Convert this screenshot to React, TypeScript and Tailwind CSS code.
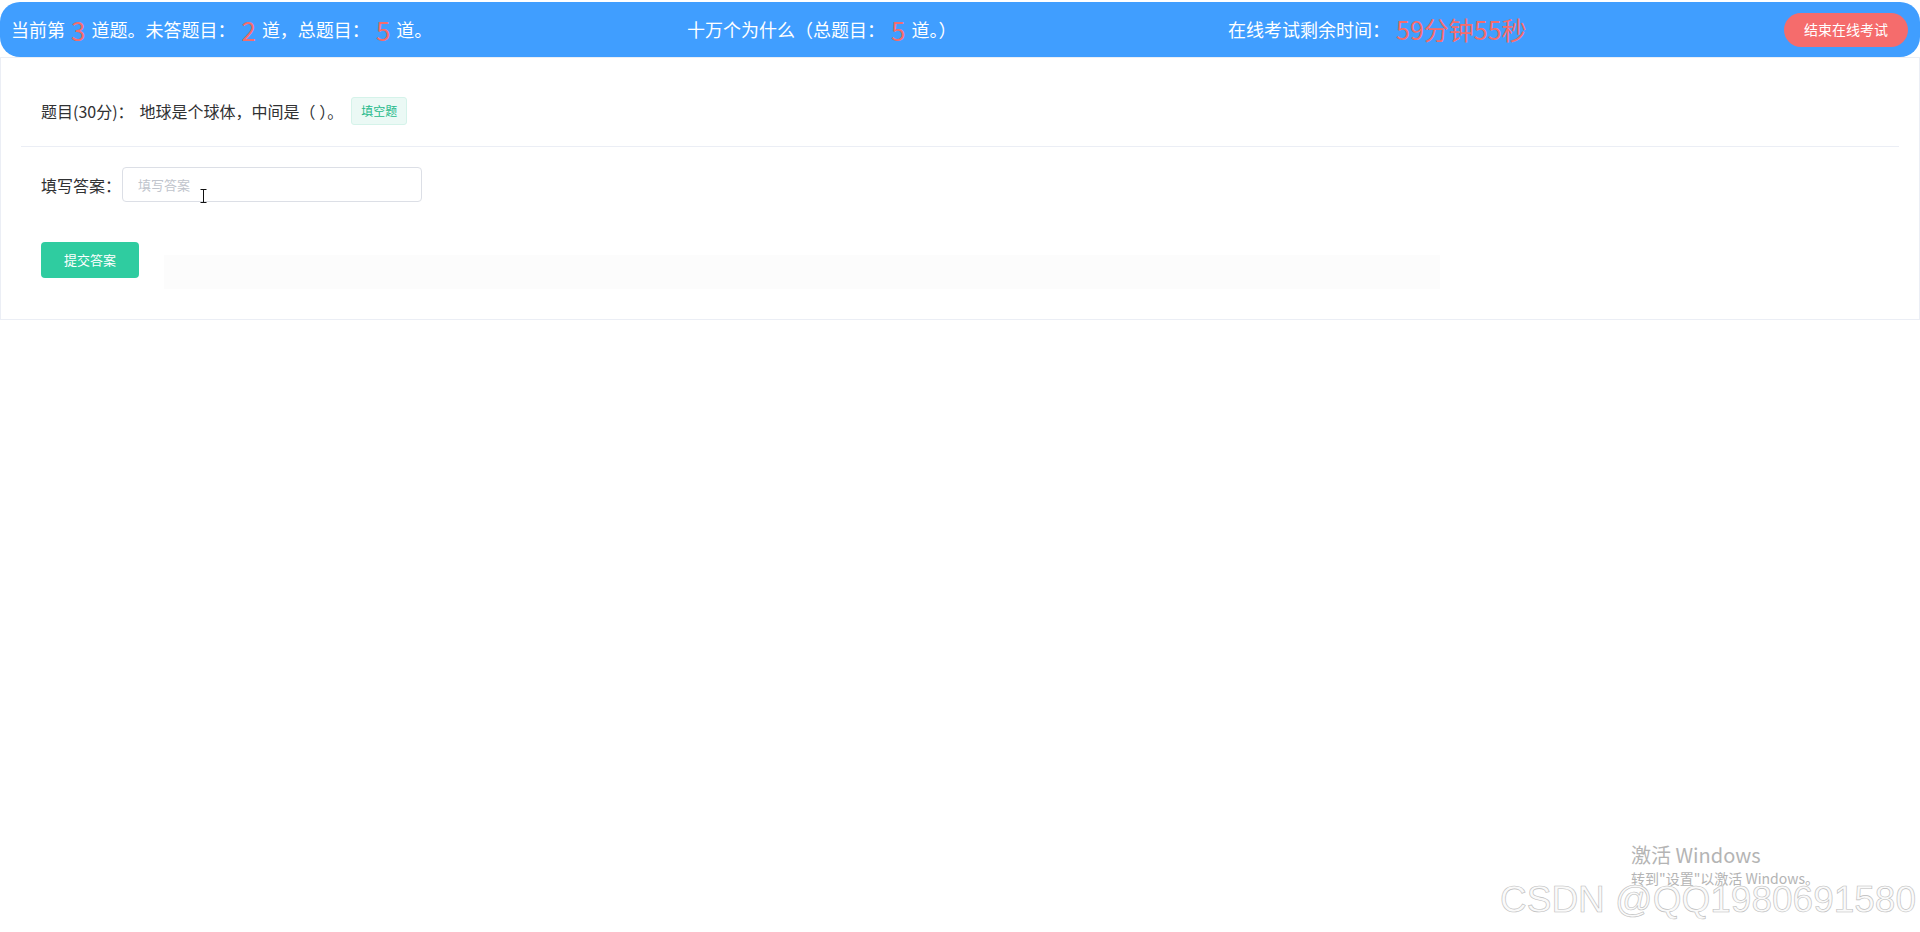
import React from 'react';

const font = { fontFamily: '"Noto Sans CJK SC", "Noto Sans", sans-serif' };

function Num({ children }: { children: React.ReactNode }) {
  return <span className="mx-[6px] text-[26px] leading-none text-[#f56c6c]">{children}</span>;
}

export default function App() {
  return (
    <div className="relative w-[1920px] h-[932px] bg-white overflow-hidden" style={font}>
      {/* Top bar */}
      <div className="pt-[2px]">
        <div className="flex items-center h-[55px] rounded-[20px] bg-[#409eff] text-white text-[18px]">
          <div className="w-[687px] pl-[11px] flex items-center">
            当前第<Num>3</Num>道题。未答题目：<Num>2</Num>道，总题目：<Num>5</Num>道。
          </div>
          <div className="w-[541px] flex items-center">
            十万个为什么（总题目：<Num>5</Num>道。）
          </div>
          <div className="flex-1 flex items-center">
            在线考试剩余时间：<span className="ml-[6px] text-[25px] leading-none text-[#f56c6c]">59分钟55秒</span>
          </div>
          <button className="mr-[12px] w-[124px] h-[34px] rounded-full bg-[#f56c6c] text-white text-[14px]">
            结束在线考试
          </button>
        </div>
      </div>

      {/* Question card */}
      <div className="border border-[#ebeef5] h-[263px] text-[16px] text-[#303133]">
        <div className="flex items-center h-[88px] pt-[18px] pl-[40px]">
          <span>题目(30分)：</span>
          <span className="ml-[6px]">地球是个球体，中间是（ ）。</span>
          <span className="ml-[8px] h-[28px] px-[9px] flex items-center rounded-[3px] border border-[#d5f3ea] bg-[#ebf9f5] text-[12px] text-[#1fb98b]">
            填空题
          </span>
        </div>
        <div className="mx-[20px] border-t border-[#ebeef5]" />
        <div className="flex items-center pl-[40px] mt-[20px]">
          <span className="w-[81px]">填写答案：</span>
          <div className="relative">
            <input
              placeholder="填写答案"
              className="w-[300px] h-[35px] rounded-[4px] border border-[#dcdfe6] px-[15px] text-[13px] outline-none placeholder:text-[#c0c4cc]"
            />
            {/* mouse text cursor */}
            <svg className="absolute left-[78px] top-[22px]" width="7" height="14" viewBox="0 0 7 14">
              <path d="M0.5 0.5h6M3.5 0.5v13M0.5 13.5h6" stroke="#111" strokeWidth="1" fill="none" />
            </svg>
          </div>
        </div>
        <div className="flex items-start mt-[40px] pl-[40px]">
          <button className="w-[98px] h-[36px] rounded-[4px] bg-[#2fcca0] text-white text-[13px]">提交答案</button>
          <div className="ml-[25px] mt-[13px] w-[1276px] h-[34px] bg-[#fcfcfc]" />
        </div>
      </div>

      {/* Watermarks */}
      <div className="absolute left-[1631px] top-[843px] text-[#b4b4b4]">
        <div className="text-[20px] leading-[24px]">激活 Windows</div>
        <div className="text-[14px] leading-[18px] mt-[2px]">转到"设置"以激活 Windows。</div>
      </div>
      <div
        className="absolute left-[1500px] top-[878px] text-[37px] leading-[44px] text-[#fafafa]"
        style={{ fontFamily: '"Liberation Sans", Arial, sans-serif', WebkitTextStroke: '0.6px #bdbdbd' }}
      >
        CSDN @QQ1980691580
      </div>
    </div>
  );
}
